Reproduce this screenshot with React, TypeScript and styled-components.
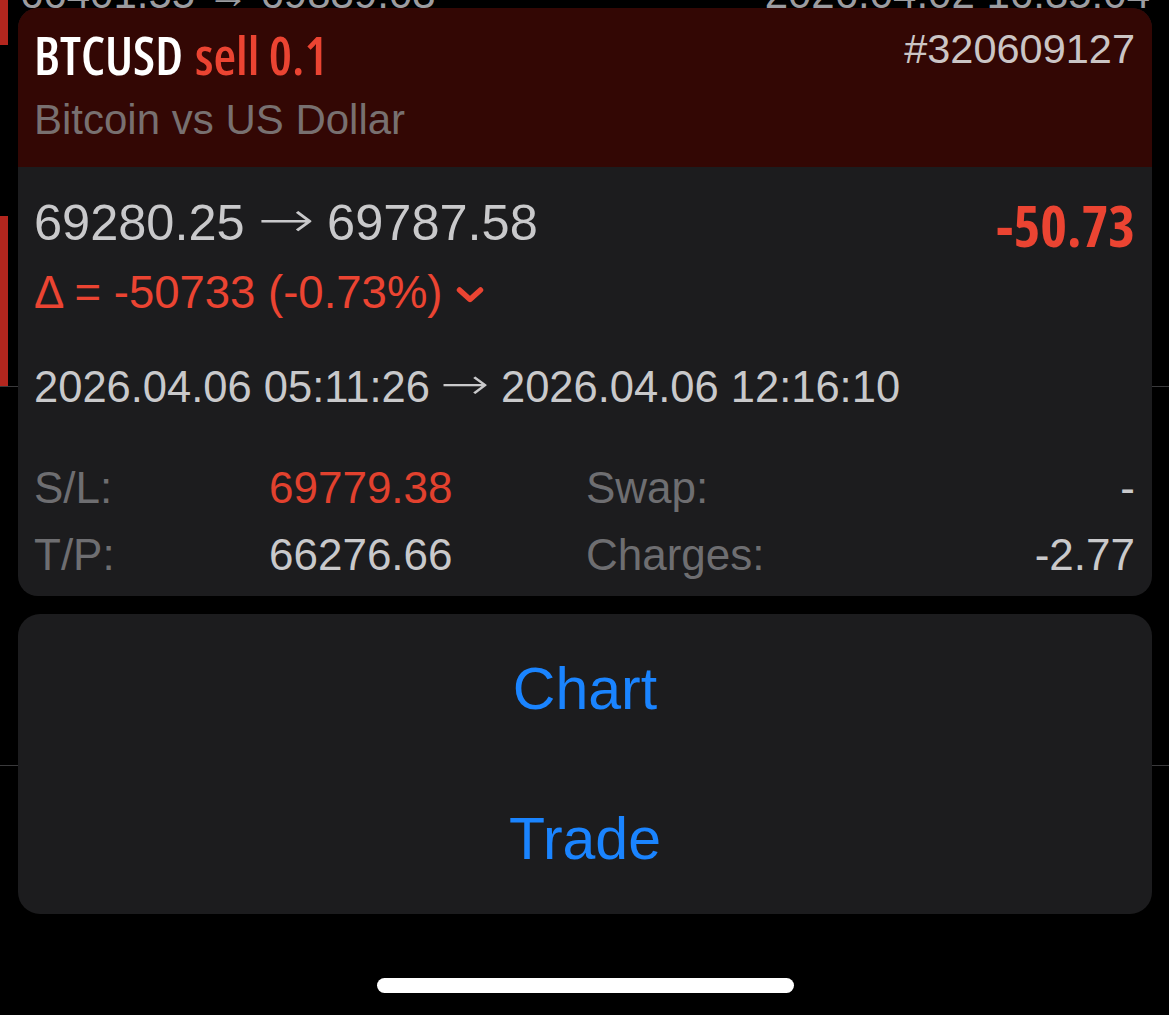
import React from "react";
import styled, { createGlobalStyle } from "styled-components";

const Global = createGlobalStyle`
  html, body { margin: 0; padding: 0; background: #000; }
  body { font-family: "Liberation Sans", Arial, sans-serif; overflow: hidden; }
  * { box-sizing: border-box; }
`;

const Screen = styled.div`
  position: relative;
  width: 1169px;
  height: 1015px;
  background: #000;
  overflow: hidden;
`;

/* ---------- background list (under the sheet) ---------- */
const List = styled.div`
  display: flex;
  flex-direction: column;
  margin-top: -40px;
`;

const ListRow = styled.div<{ $h: number; $divider?: boolean }>`
  display: flex;
  height: ${(p) => p.$h}px;
  border-bottom: ${(p) => (p.$divider ? "1px solid #3a3a3c" : "none")};
`;

const RedBar = styled.div<{ $on?: boolean }>`
  width: 8px;
  flex: none;
  background: ${(p) => (p.$on ? "#b3261e" : "transparent")};
`;

const RowText = styled.div`
  flex: 1;
  display: flex;
  justify-content: space-between;
  padding: 9px 19px 0 12px;
  font-size: 42px;
  line-height: 50px;
  color: #9c9ca0;
`;

/* ---------- overlay ---------- */
const Overlay = styled.div`
  position: absolute;
  inset: 0;
  display: flex;
  flex-direction: column;
  padding: 8px 17px 0 18px;
`;

const Card = styled.div`
  border-radius: 20px;
  overflow: hidden;
  background: #1c1c1e;
`;

const Header = styled.div`
  height: 159px;
  background: #330704;
  padding: 17px 17px 0 16px;
`;

const TitleRow = styled.div`
  display: flex;
  justify-content: space-between;
  align-items: flex-start;
`;

const condensed = `
  font-family: "Open Sans", "Noto Sans", "DejaVu Sans Condensed", sans-serif;
  font-stretch: 75%;
`;

const Title = styled.div`
  ${condensed}
  font-weight: 600;
  font-size: 52px;
  line-height: 60px;
  color: #ffffff;
  display: flex;
  gap: 12px;
`;

const Side = styled.span`
  color: #eb4432;
`;

const Ticket = styled.div`
  margin-top: -1px;
  font-size: 41.5px;
  line-height: 50px;
  color: #cbc5c5;
`;

const Subtitle = styled.div`
  margin-top: 10px;
  font-size: 42px;
  line-height: 50px;
  color: #787070;
`;

const Body = styled.div`
  padding: 28px 17px 8px 16px;
`;

const PriceRow = styled.div`
  display: flex;
  justify-content: space-between;
  align-items: flex-start;
`;

const Price = styled.div`
  font-size: 50.5px;
  line-height: 56px;
  color: #c9c9cb;
`;

const Arrow = styled.span`
  display: inline-block;
  font-family: "DejaVu Sans", sans-serif;
  font-weight: 200;
  margin: 0 0.12em;
  transform: translateY(-0.06em) scaleX(1.35);
`;

const Profit = styled.div`
  ${condensed}
  font-weight: 700;
  font-size: 57px;
  line-height: 60px;
  color: #eb4432;
`;

const DeltaRow = styled.div`
  margin-top: 13px;
  height: 50px;
  display: flex;
  align-items: center;
  gap: 13px;
  font-size: 45.5px;
  line-height: 50px;
  color: #eb4432;
`;

const DateRow = styled.div`
  margin-top: 44px;
  font-size: 43.5px;
  line-height: 50px;
  color: #c9c9cb;
`;

const Stats = styled.div`
  margin-top: 42px;
  display: grid;
  grid-template-columns: 235px 317px 1fr auto;
  grid-auto-rows: 67px;
  font-size: 44px;
  line-height: 67px;
`;

const Label = styled.div`
  color: #6e6e71;
`;

const Value = styled.div<{ $red?: boolean; $right?: boolean }>`
  color: ${(p) => (p.$red ? "#e2412e" : "#c9c9cb")};
  text-align: ${(p) => (p.$right ? "right" : "left")};
`;

const Sheet = styled.div`
  margin-top: 18px;
  border-radius: 22px;
  background: #1c1c1e;
  display: flex;
  flex-direction: column;
`;

const SheetButton = styled.button`
  height: 150px;
  border: none;
  background: transparent;
  font-family: "Liberation Sans", Arial, sans-serif;
  font-size: 59px;
  color: #1a84ff;
  padding: 0;
  cursor: pointer;
`;

const HomeIndicator = styled.div`
  margin-top: 64px;
  align-self: center;
  width: 417px;
  height: 15px;
  border-radius: 8px;
  background: #fff;
`;

const Chevron = () => (
  <svg width="28" height="18" viewBox="0 0 28 18" style={{ marginTop: 4 }}>
    <polyline
      points="3.5,4 14,13.5 24.5,4"
      fill="none"
      stroke="#eb4432"
      strokeWidth="5.5"
      strokeLinecap="round"
      strokeLinejoin="round"
    />
  </svg>
);

export default function App() {
  return (
    <Screen>
      <Global />
      <List>
        <ListRow $h={85}>
          <RedBar $on />
          <RowText>
            <span>66401.55 → 69839.03</span>
            <span>2026.04.02 16:35:04</span>
          </RowText>
        </ListRow>
        <ListRow $h={171} />
        <ListRow $h={171} $divider>
          <RedBar $on />
        </ListRow>
        <ListRow $h={379} $divider />
      </List>

      <Overlay>
        <Card>
          <Header>
            <TitleRow>
              <Title>
                <span>BTCUSD</span>
                <Side>sell 0.1</Side>
              </Title>
              <Ticket>#320609127</Ticket>
            </TitleRow>
            <Subtitle>Bitcoin vs US Dollar</Subtitle>
          </Header>
          <Body>
            <PriceRow>
              <Price>
                69280.25 <Arrow>→</Arrow> 69787.58
              </Price>
              <Profit>-50.73</Profit>
            </PriceRow>
            <DeltaRow>
              <span>Δ = -50733 (-0.73%)</span>
              <Chevron />
            </DeltaRow>
            <DateRow>
              2026.04.06 05:11:26 <Arrow>→</Arrow> 2026.04.06 12:16:10
            </DateRow>
            <Stats>
              <Label>S/L:</Label>
              <Value $red>69779.38</Value>
              <Label>Swap:</Label>
              <Value $right>-</Value>
              <Label>T/P:</Label>
              <Value>66276.66</Value>
              <Label>Charges:</Label>
              <Value $right>-2.77</Value>
            </Stats>
          </Body>
        </Card>
        <Sheet>
          <SheetButton>Chart</SheetButton>
          <SheetButton>Trade</SheetButton>
        </Sheet>
        <HomeIndicator />
      </Overlay>
    </Screen>
  );
}
